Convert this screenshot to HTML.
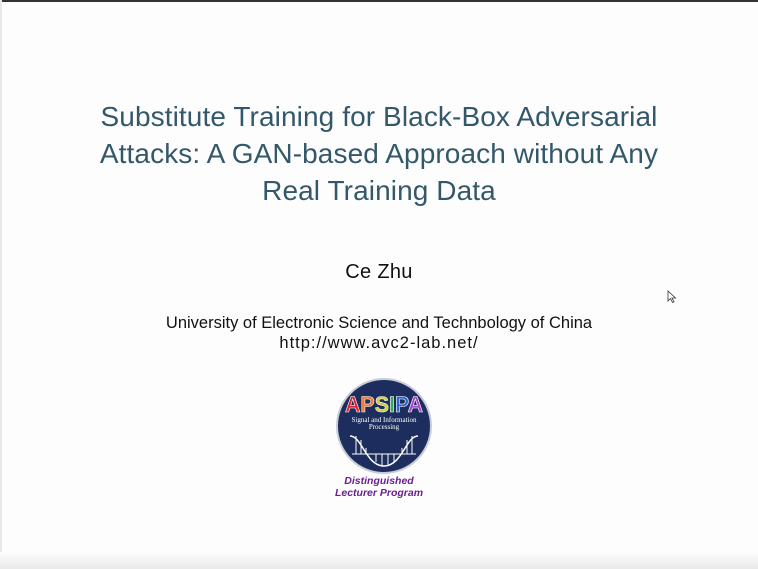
<!DOCTYPE html>
<html><head><meta charset="utf-8"><style>
html,body{margin:0;padding:0}
body{width:758px;height:569px;position:relative;overflow:hidden;background:#fdfdfd;font-family:"Liberation Sans",sans-serif}
.top{position:absolute;left:0;top:0;width:758px;height:2px;background:#333}
.left{position:absolute;left:0;top:0;width:2px;height:569px;background:#e8e8e8}
.bot{position:absolute;left:0;top:552px;width:758px;height:17px;background:linear-gradient(#fdfdfd,#e9e9e9)}
.c{position:absolute;left:0;width:758px;text-align:center}
.title{color:#33586a;font-size:28px;line-height:37px;top:98px;letter-spacing:0.1px}
</style></head><body>
<div class="top"></div><div class="left"></div><div class="bot"></div>
<div class="c title">Substitute Training for Black-Box Adversarial<br>Attacks: A GAN-based Approach without Any<br>Real Training Data</div>
<div class="c" style="top:261px;font-size:20px;color:#111;letter-spacing:0.3px">Ce Zhu</div>
<div class="c" style="top:314px;font-size:16.5px;color:#111">University of Electronic Science and Technbology of China</div>
<div class="c" style="top:334px;font-size:16.5px;color:#111;letter-spacing:1px">http://www.avc2-lab.net/</div>
<svg style="position:absolute;left:334px;top:378px" width="100" height="100" viewBox="0 0 100 100">
<circle cx="50" cy="48" r="47" fill="#1d2d5e" stroke="#c8ccd8" stroke-width="2"/>
<text x="50" y="34" text-anchor="middle" font-family="Liberation Sans" font-weight="bold" font-size="22" fill="#d23" stroke="#fff" stroke-width="0.6" textLength="78" lengthAdjust="spacingAndGlyphs">A<tspan fill="#e73">P</tspan><tspan fill="#cc3">S</tspan><tspan fill="#3a5">I</tspan><tspan fill="#36c">P</tspan><tspan fill="#a4c">A</tspan></text>
<text x="50" y="44" text-anchor="middle" font-family="Liberation Serif" font-size="7" fill="#fff">Signal and Information</text>
<text x="50" y="51" text-anchor="middle" font-family="Liberation Serif" font-size="7" fill="#fff">Processing</text>
<path d="M16 58 C28 58 32 88 50 88 C68 88 72 58 84 58" fill="none" stroke="#fff" stroke-width="1.5"/>
<path d="M22 58V76M27 62V76M32 70V76M42 76V84M48 76V88M54 76V87M60 76V84M68 70V76M73 62V76M78 58V76M18 76H82" stroke="#fff" stroke-width="1"/>
</svg>
<div class="c" style="top:475px;font-size:10.5px;font-weight:bold;font-style:italic;color:#6a1f8e;line-height:12px">Distinguished<br>Lecturer Program</div>
<svg style="position:absolute;left:667px;top:290px" width="10" height="14"><path d="M1 1V11L3.5 8.5L5.5 12.5L7 11.8L5 8H8.5Z" fill="#fff" stroke="#333" stroke-width="0.8"/></svg>
</body></html>
